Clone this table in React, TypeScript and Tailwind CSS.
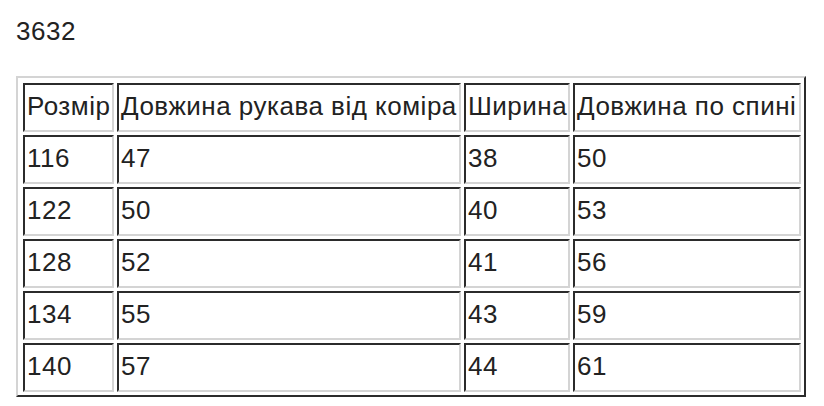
const rows = [
  ["116", "47", "38", "50"],
  ["122", "50", "40", "53"],
  ["128", "52", "41", "56"],
  ["134", "55", "43", "59"],
  ["140", "57", "44", "61"],
]

const headers = ["Розмір", "Довжина рукава від коміра", "Ширина", "Довжина по спині"]

function Cell({ children }: { children: React.ReactNode }) {
  return (
    <td className="h-[49px] border-2 border-solid border-t-[#2b2b2b] border-l-[#2b2b2b] border-r-[#d4d4d4] border-b-[#d4d4d4] px-[2px] py-0 align-middle whitespace-nowrap">
      {children}
    </td>
  )
}

export default function App() {
  return (
    <div className="bg-white pl-4 pt-[17px] pb-2 text-[#222] font-['Liberation_Sans',Arial,sans-serif] text-[26px] leading-[1.15] tracking-[0.5px]">
      <div>3632</div>

      <table className="mt-[29px] w-[790px] table-fixed border-separate border-spacing-[3px] border-2 border-solid border-t-[#d4d4d4] border-l-[#d4d4d4] border-r-[#2b2b2b] border-b-[#2b2b2b] pl-[2px] pt-[2px]">
        <colgroup>
          <col className="w-[91px]" />
          <col className="w-[344px]" />
          <col className="w-[106px]" />
          <col className="w-[228px]" />
        </colgroup>
        <tbody>
          <tr>
            {headers.map((h) => (
              <Cell key={h}>{h}</Cell>
            ))}
          </tr>
          {rows.map((r) => (
            <tr key={r[0]}>
              {r.map((v, i) => (
                <Cell key={i}>{v}</Cell>
              ))}
            </tr>
          ))}
        </tbody>
      </table>
    </div>
  )
}
